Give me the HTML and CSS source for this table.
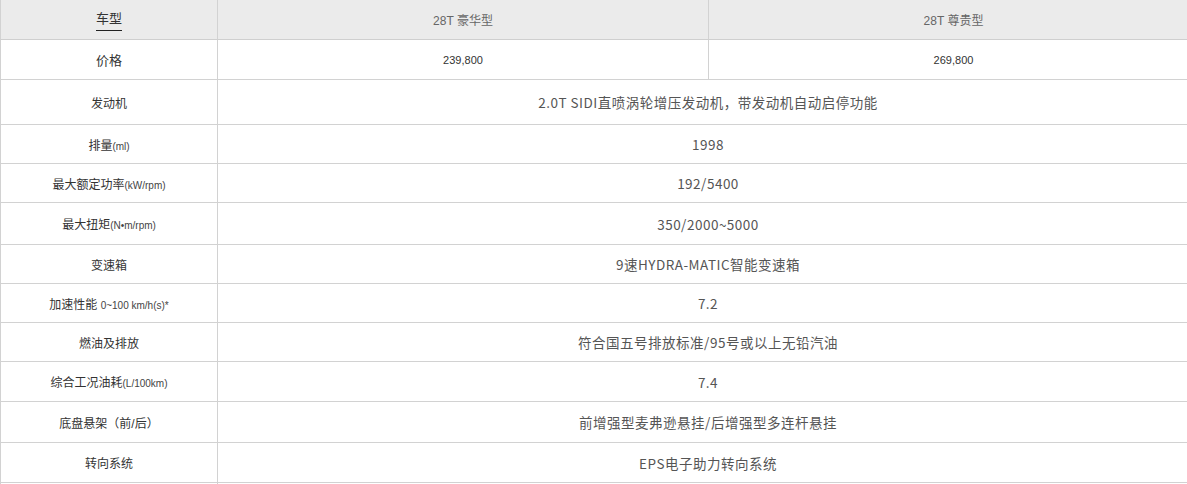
FILE: index.html
```html
<!DOCTYPE html>
<html lang="zh-CN">
<head>
<meta charset="utf-8">
<title>车型参数</title>
<link rel="stylesheet" href="styles.css">
</head>
<body>
<div class="wrap">
<table class="spec">
  <colgroup>
    <col class="c-label">
    <col class="c-val">
    <col class="c-val2">
  </colgroup>
  <thead>
    <tr class="h40">
      <th class="label"><span class="model-title">车型</span></th>
      <th class="model">28T 豪华型</th>
      <th class="model">28T 尊贵型</th>
    </tr>
  </thead>
  <tbody>
    <tr class="h40">
      <td class="label big">价格</td>
      <td class="price">239,800</td>
      <td class="price">269,800</td>
    </tr>
    <tr class="h45">
      <td class="label">发动机</td>
      <td class="val" colspan="2">2.0T SIDI直喷涡轮增压发动机，带发动机自动启停功能</td>
    </tr>
    <tr class="h39">
      <td class="label">排量<span class="unit">(ml)</span></td>
      <td class="val" colspan="2">1998</td>
    </tr>
    <tr class="h39">
      <td class="label">最大额定功率<span class="unit">(kW/rpm)</span></td>
      <td class="val" colspan="2">192/5400</td>
    </tr>
    <tr class="h42">
      <td class="label">最大扭矩<span class="unit">(N•m/rpm)</span></td>
      <td class="val" colspan="2">350/2000~5000</td>
    </tr>
    <tr class="h39">
      <td class="label">变速箱</td>
      <td class="val" colspan="2">9速HYDRA-MATIC智能变速箱</td>
    </tr>
    <tr class="h39">
      <td class="label">加速性能 <span class="unit">0~100 km/h(s)*</span></td>
      <td class="val" colspan="2">7.2</td>
    </tr>
    <tr class="h39">
      <td class="label">燃油及排放</td>
      <td class="val" colspan="2">符合国五号排放标准/95号或以上无铅汽油</td>
    </tr>
    <tr class="h40">
      <td class="label">综合工况油耗<span class="unit">(L/100km)</span></td>
      <td class="val" colspan="2">7.4</td>
    </tr>
    <tr class="h41">
      <td class="label">底盘悬架（前/后）</td>
      <td class="val" colspan="2">前增强型麦弗逊悬挂/后增强型多连杆悬挂</td>
    </tr>
    <tr class="h40">
      <td class="label">转向系统</td>
      <td class="val" colspan="2">EPS电子助力转向系统</td>
    </tr>
    <tr class="h40">
      <td class="label"></td>
      <td class="val" colspan="2"></td>
    </tr>
  </tbody>
</table>
</div>
</body>
</html>
```
FILE: styles.css
```css
html, body {
  margin: 0;
  padding: 0;
  background: #fff;
  overflow: hidden;
}

.wrap {
  width: 1199px;
}

.spec {
  width: 1199px;
  table-layout: fixed;
  border-collapse: separate;
  border-spacing: 0;
  font-family: "Liberation Sans", "Noto Sans CJK SC", sans-serif;
  color: #333;
}

.c-label { width: 218px; }
.c-val { width: 491px; }
.c-val2 { width: 490px; }

.spec th,
.spec td {
  box-sizing: border-box;
  padding: 0;
  text-align: center;
  vertical-align: middle;
  border-right: 1px solid #d2d2d2;
  border-bottom: 1px solid #d2d2d2;
  font-weight: normal;
}

.spec th:first-child,
.spec td:first-child {
  border-left: 1px solid #d2d2d2;
}

.spec thead th {
  background: #ebebeb;
  border-bottom-color: #cfcfcf;
}

.h39 { height: 39px; }
.h40 { height: 40px; }
.h41 { height: 41px; }
.h42 { height: 42px; }
.h45 { height: 45px; }

.h39 > *, .h40 > *, .h41 > *, .h42 > *, .h45 > * { height: inherit; }

.model-title {
  display: inline-block;
  font-size: 13px;
  color: #333;
  line-height: 16px;
  padding-bottom: 3px;
  border-bottom: 1px solid #222;
  margin-top: 2px;
}

.model {
  font-size: 12px;
  color: #666;
}

.label {
  font-size: 12px;
  color: #333;
}

.label.big {
  font-size: 13px;
}

.unit {
  font-size: 10px;
  color: #444;
}

.price {
  font-size: 11px;
  color: #333;
}

.val {
  font-family: "Noto Sans CJK SC", "Liberation Sans", sans-serif;
  font-size: 13.5px;
  color: #555;
  letter-spacing: 0.5px;
}
```
